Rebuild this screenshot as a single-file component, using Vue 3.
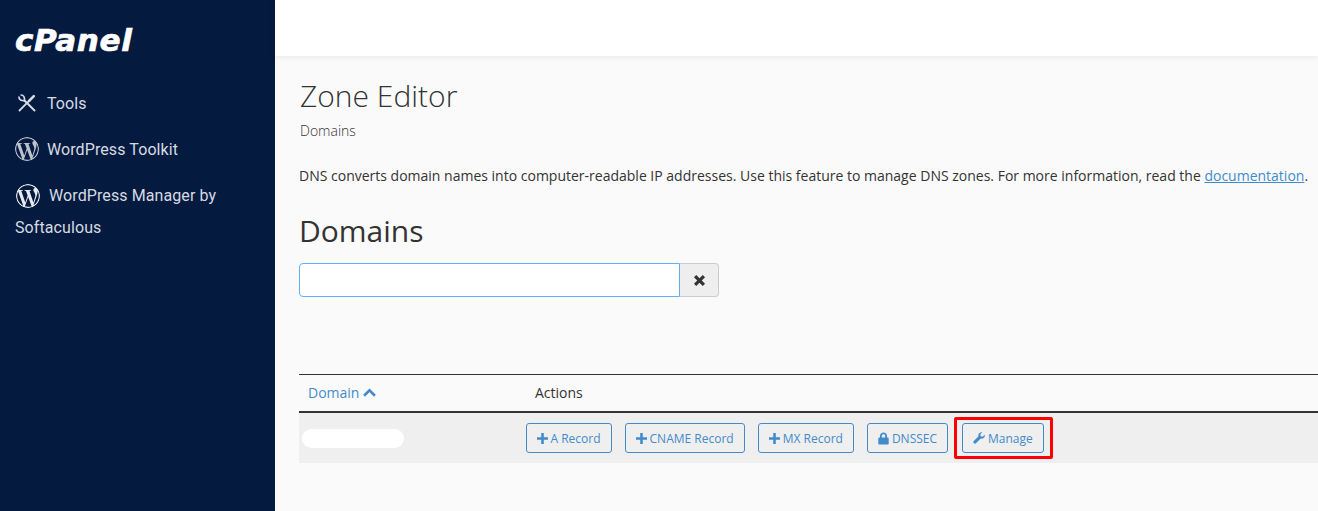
<script setup>
const wp = "M21.469 6.825c.84 1.537 1.318 3.3 1.318 5.175 0 3.979-2.156 7.456-5.363 9.325l3.295-9.527c.615-1.54.82-2.771.82-3.864 0-.405-.026-.78-.07-1.11m-7.981.105c.647-.03 1.232-.105 1.232-.105.582-.075.514-.93-.067-.899 0 0-1.755.135-2.88.135-1.064 0-2.85-.15-2.85-.15-.585-.03-.661.855-.075.885 0 0 .54.061 1.125.09l1.68 4.605-2.37 7.08L5.354 6.9c.649-.03 1.234-.1 1.234-.1.585-.075.516-.93-.065-.896 0 0-1.746.138-2.874.138-.2 0-.438-.008-.69-.015C4.911 3.15 8.235 1.215 12 1.215c2.809 0 5.365 1.072 7.286 2.833-.046-.003-.091-.009-.141-.009-1.06 0-1.812.923-1.812 1.914 0 .89.513 1.643 1.06 2.531.411.72.89 1.643.89 2.977 0 .915-.354 1.994-.821 3.479l-1.075 3.585-3.9-11.61.001.014zM12 22.784c-1.059 0-2.081-.153-3.048-.437l3.237-9.406 3.315 9.087c.024.053.05.101.078.149-1.12.393-2.325.609-3.582.609M1.211 12c0-1.564.336-3.05.935-4.39L7.29 21.709C3.694 19.96 1.212 16.271 1.211 12M12 0C5.385 0 0 5.385 0 12s5.385 12 12 12 12-5.385 12-12S18.615 0 12 0";
const plus = "M4.6 0h2.8v4.6H12v2.8H7.4V12H4.6V7.4H0V4.6h4.6z";
const buttons = [
  { label: "A Record", icon: "plus" },
  { label: "CNAME Record", icon: "plus" },
  { label: "MX Record", icon: "plus" },
  { label: "DNSSEC", icon: "lock" },
  { label: "Manage", icon: "wrench", marked: true },
];
</script>

<template>
  <div class="page">
    <aside class="sidebar">
      <div class="logo">cPanel</div>
      <nav class="nav">
        <a class="nav-item tools">
          <svg class="tools-icon" viewBox="0 0 18 18" fill="none" stroke="#d5dae2" stroke-linecap="round">
            <path d="M6.500 6.500l10 10" stroke-width="2" />
            <path d="M1 3.200C1 5.500 3.500 7 6.500 6.500 7 3.500 5.500 1 3.200 1" stroke-width="1.700" />
            <path d="M10.300 7.700L1.500 16.500" stroke-width="1.800" />
            <path d="M11 7L15.800 2.200" stroke-width="2.600" />
          </svg>
          <span>Tools</span>
        </a>
        <a class="nav-item">
          <svg class="wp-icon dim" viewBox="0 0 24 24"><path :d="wp" /></svg>
          <span>WordPress Toolkit</span>
        </a>
        <a class="nav-item wrap">
          <svg class="wp-icon bright" viewBox="0 0 24 24"><path :d="wp" /></svg>
          WordPress Manager by Softaculous
        </a>
      </nav>
    </aside>

    <div class="main">
      <header class="topbar"></header>
      <section class="content">
        <h1 class="title">Zone Editor</h1>
        <div class="subtitle">Domains</div>
        <p class="intro">
          DNS converts domain names into computer-readable IP addresses. Use this feature to manage DNS zones. For more information, read the
          <a class="link">documentation</a>.
        </p>
        <h2 class="heading">Domains</h2>
        <div class="search">
          <input class="search-input" type="text" />
          <button class="clear" type="button" aria-label="Clear">
            <svg viewBox="0 0 12 12" width="13" height="13"><path d="M3 .9L6 3.900 9 .9 11.100 3 8.100 6l3 3L9 11.100l-3-3-3 3L.9 9l3-3-3-3z" fill="#333" /></svg>
          </button>
        </div>
        <div class="table">
          <div class="thead">
            <div class="th sort">
              Domain
              <svg viewBox="0 0 12 8" width="13" height="9" fill="none" stroke="#428bca" stroke-width="2.400"><path d="M1 7l5-5 5 5" /></svg>
            </div>
            <div class="th">Actions</div>
          </div>
          <div class="row">
            <div class="cell-domain"><span class="redacted"></span></div>
            <div class="actions">
              <button v-for="b in buttons" :key="b.label" class="btn" type="button">
                <svg v-if="b.icon === 'plus'" viewBox="0 0 12 12" width="11" height="11"><path :d="plus" /></svg>
                <svg v-else-if="b.icon === 'lock'" viewBox="0 0 11 13" width="11" height="13"><path d="M2 5.500V3.800C2 1.800 3.500.5 5.500.5S9 1.800 9 3.800v1.700h.6c.6 0 1.100.5 1.100 1.100v4.800c0 .6-.5 1.100-1.100 1.100H1.400c-.6 0-1.100-.5-1.100-1.100V6.600c0-.6.5-1.100 1.100-1.100zm1.800 0h3.400V3.800c0-1-.7-1.600-1.700-1.600s-1.700.6-1.700 1.600z" /></svg>
                <svg v-else class="wrench" viewBox="0 0 12 12" width="12" height="12"><path d="M11.800 2.700c.2 1.200-.1 2.300-1 3.100-.9.800-2 1-3.100.7L3 11.200c-.6.600-1.500.6-2.100 0l-.1-.1c-.6-.6-.6-1.500 0-2.100l4.700-4.700C5.200 3.200 5.400 2 6.200 1.200 7 .3 8.200 0 9.300.2L7.300 2.300l.4 2 2 .4z" /></svg>
                {{ b.label }}
                <span v-if="b.marked" class="marker"></span>
              </button>
            </div>
          </div>
        </div>
      </section>
    </div>
  </div>
</template>

<style>
html, body { margin: 0; background: #fafafa; overflow: hidden; }
</style>

<style scoped>
.page {
  display: flex;
  width: 1318px;
  height: 511px;
  overflow: hidden;
  background: #fafafa;
  font-family: "Open Sans", sans-serif;
  color: #333;
}
.sidebar {
  flex: 0 0 275px;
  box-sizing: border-box;
  padding: 22px 15px 0;
  background: #051a3f;
  font-family: Roboto, sans-serif;
  color: #d5dae2;
}
.logo {
  height: 36px;
  font-family: "DejaVu Sans", sans-serif;
  font-size: 31px;
  line-height: 36px;
  font-weight: 700;
  font-style: italic;
  letter-spacing: 0.6px;
  color: #fff;
  -webkit-text-stroke: 0.7px #fff;
}
.nav { margin-top: 22px; display: flex; flex-direction: column; }
.nav-item { display: flex; align-items: center; height: 46px; font-size: 16px; letter-spacing: 0.09px; }
.tools { padding-left: 3px; }
.tools-icon { width: 18px; height: 18px; margin-right: 11px; }
.wp-icon { width: 24px; height: 24px; margin-right: 8px; flex: none; border-radius: 50%; }
.wp-icon.dim { fill: #bcc2cd; }
.wp-icon.bright { fill: #e8ebef; vertical-align: -7px; margin: 0 5px 0 1px; }
.nav-item.wrap { display: block; height: auto; line-height: 32px; padding-top: 8px; width: 230px; }

.main { flex: 1; min-width: 0; display: flex; flex-direction: column; }
.topbar { flex: 0 0 56px; background: #fff; box-shadow: 0 1px 6px rgba(0, 0, 0, 0.08); }
.content { flex: 1; padding: 0 0 0 24px; }
.title { margin: 20px 0 0 1px; font-size: 30px; line-height: 40px; font-weight: 300; }
.subtitle { margin: 6px 0 0 1px; font-size: 14px; line-height: 18px; font-weight: 300; }
.intro { margin: 26px 0 0; font-size: 14px; line-height: 20px; white-space: nowrap; }
.link { color: #428bca; text-decoration: underline; }
.heading { margin: 25px 0 0; font-size: 30px; line-height: 40px; font-weight: 400; }
.search { display: flex; margin-top: 12px; }
.search-input {
  box-sizing: border-box;
  width: 381px;
  height: 34px;
  padding: 0 12px;
  border: 1px solid #61b0f5;
  border-radius: 4px 0 0 4px;
  background: #fff;
  outline: none;
}
.clear {
  display: flex;
  align-items: center;
  justify-content: center;
  box-sizing: border-box;
  width: 39px;
  height: 34px;
  padding: 0;
  border: 1px solid #ccc;
  border-left: 0;
  border-radius: 0 4px 4px 0;
  background: #eee;
}
.table { margin-top: 77px; }
.thead {
  display: grid;
  grid-template-columns: 227px 1fr;
  height: 35px;
  padding-bottom: 1px;
  align-items: center;
  border-top: 1px solid #333;
  border-bottom: 2px solid #333;
  font-size: 14px;
}
.th { padding-left: 9px; }
.sort { color: #428bca; display: flex; align-items: center; gap: 4px; }
.row {
  display: grid;
  grid-template-columns: 227px 1fr;
  align-items: center;
  height: 50px;
  background: #efefef;
}
.cell-domain { padding-left: 3px; display: flex; }
.redacted { width: 102px; height: 19px; border-radius: 10px; background: #fff; }
.actions { display: flex; gap: 13.500px; }
.btn {
  position: relative;
  display: inline-flex;
  align-items: center;
  gap: 2.500px;
  box-sizing: border-box;
  height: 30px;
  padding: 0 10px;
  border: 1px solid #428bca;
  border-radius: 3px;
  background: transparent;
  color: #428bca;
  font-family: "Open Sans", sans-serif;
  font-size: 12px;
  white-space: nowrap;
}
.btn svg { fill: #428bca; }
.btn .wrench { margin-right: 1px; }
.marker {
  position: absolute;
  top: -7px;
  bottom: -7px;
  left: -9px;
  right: -10px;
  border: 3px solid #f00;
  border-radius: 2px;
}
</style>
